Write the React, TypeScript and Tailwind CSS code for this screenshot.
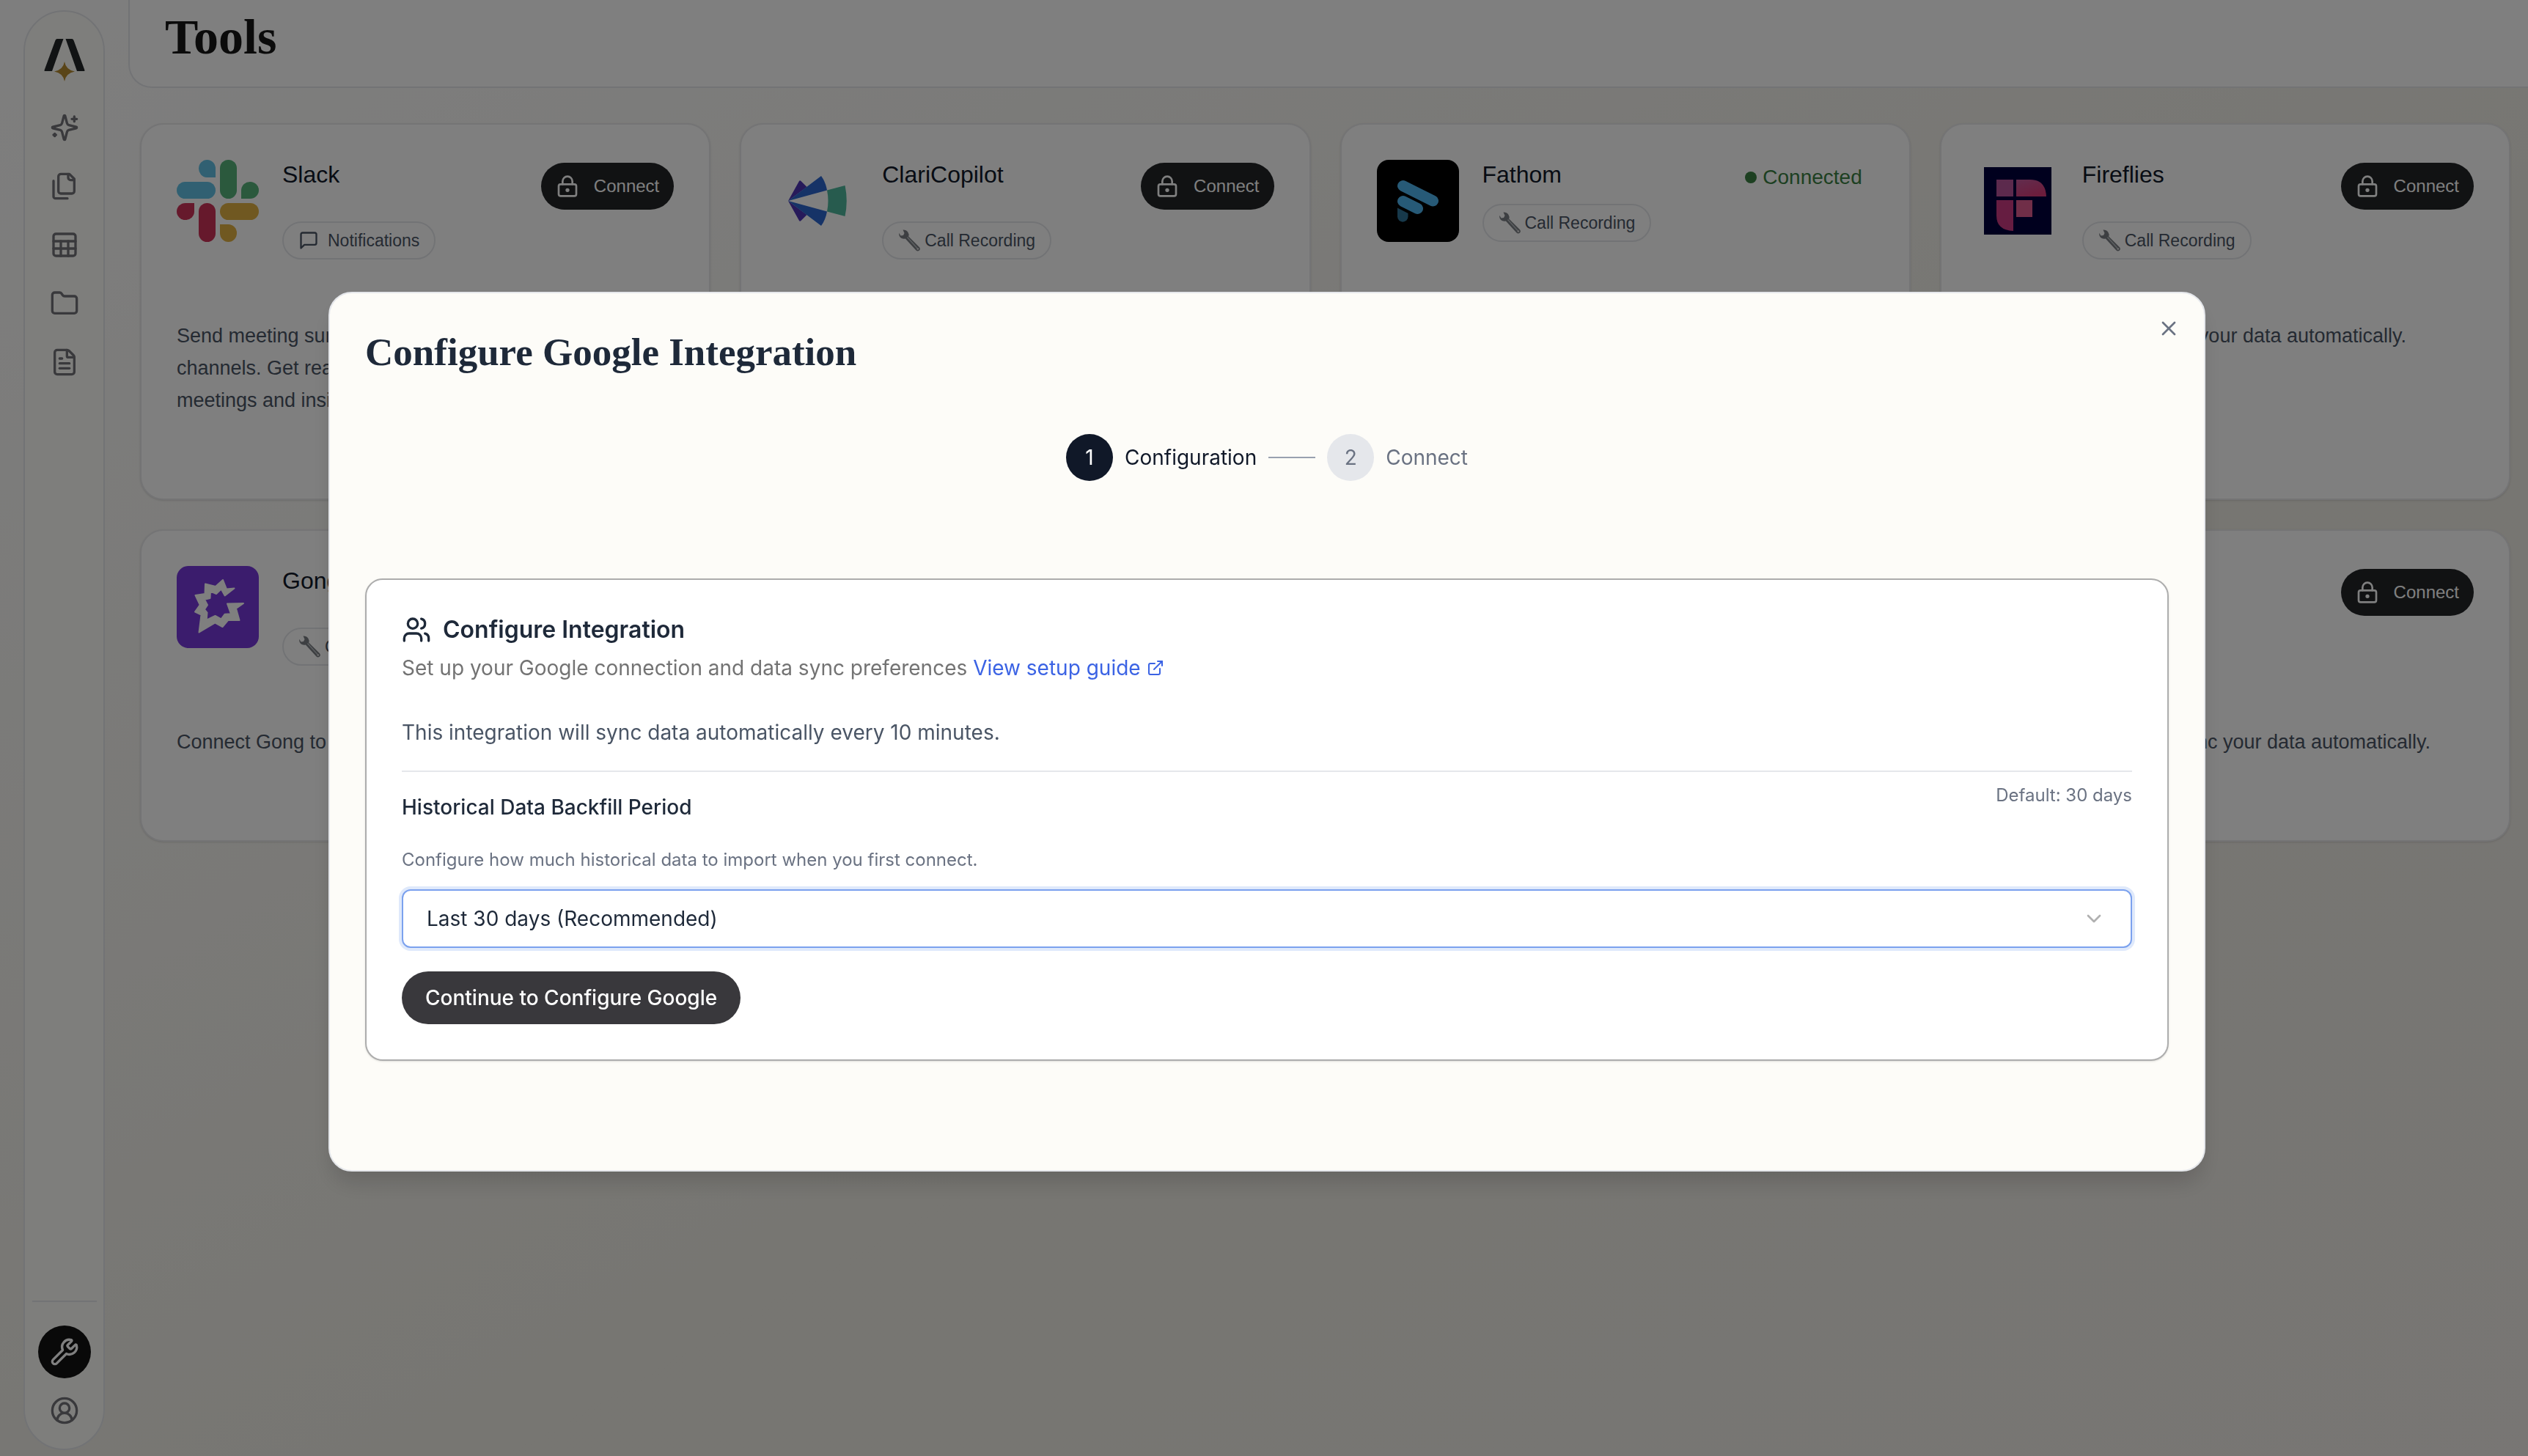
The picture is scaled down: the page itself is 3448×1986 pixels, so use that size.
import type { ReactNode } from "react";
import {
  ChevronDown,
  CircleUserRound,
  ExternalLink,
  FileText,
  Folder,
  LockKeyhole,
  Sheet,
  Users,
  Wrench,
  X,
} from "lucide-react";

type Tool = {
  name: string;
  category: string;
  description: string;
  connected?: boolean;
  logo: ReactNode;
};

/* Logos */

function BrandMark() {
  return (
    <svg viewBox="0 0 56 60" className="h-[60px] w-14">
      <path d="M18 1h8.500L11 45H1.500Q0 45 .6 43.500L15.500 3Q16.300 1 18 1z" fill="#222628" />
      <path d="M38 1h-8.500L45 45h9.500q1.500 0 .9-1.500L40.500 3Q39.700 1 38 1z" fill="#222628" />
      <path d="M28 32q1.800 11.200 14 13.500Q29.800 47.800 28 59q-1.800-11.200-14-13.500Q26.200 43.200 28 32z" fill="#b58a30" />
    </svg>
  );
}

function SparklesIcon() {
  return (
    <svg
      viewBox="0 0 24 24"
      fill="none"
      stroke="currentColor"
      strokeWidth="2"
      strokeLinecap="round"
      strokeLinejoin="round"
      className="size-10"
    >
      <path d="M9.937 15.5A2 2 0 0 0 8.500 14.063l-6.135-1.582a.5.5 0 0 1 0-.962L8.500 9.936A2 2 0 0 0 9.937 8.500l1.582-6.135a.5.5 0 0 1 .963 0L14.063 8.500A2 2 0 0 0 15.500 9.937l6.135 1.581a.5.5 0 0 1 0 .964L15.500 14.063a2 2 0 0 0-1.437 1.437l-1.582 6.135a.5.5 0 0 1-.963 0z" />
      <path d="M20 3v4M22 5h-4M4 17v2M5 18H3" />
    </svg>
  );
}

function FilesIcon() {
  return (
    <svg
      viewBox="0 0 24 24"
      fill="none"
      stroke="currentColor"
      strokeWidth="2"
      strokeLinecap="round"
      strokeLinejoin="round"
      className="size-10"
    >
      <path d="M20 7h-3a2 2 0 0 1-2-2V2" />
      <path d="M9 18a2 2 0 0 1-2-2V4a2 2 0 0 1 2-2h7l4 4v10a2 2 0 0 1-2 2Z" />
      <path d="M3 7.600v12.800A1.600 1.600 0 0 0 4.600 22h9.800" />
    </svg>
  );
}

function MessageIcon() {
  return (
    <svg
      viewBox="0 0 24 24"
      fill="none"
      stroke="currentColor"
      strokeWidth="2"
      strokeLinecap="round"
      strokeLinejoin="round"
      className="size-7"
    >
      <path d="M21 15a2 2 0 0 1-2 2H7l-4 4V5a2 2 0 0 1 2-2h14a2 2 0 0 1 2 2z" />
    </svg>
  );
}

function SpannerIcon() {
  return (
    <svg viewBox="0 0 32 32" className="size-8">
      <path
        d="M6.500 1.500 8.500 6l-1.500 3-3.500.5L1.200 5.800Q.6 11 4.600 13q3 1.200 5.200.4L24.500 29.500q2 2 4.200.3 2.200-2 .3-4.500L14.200 10.500q1-3-.8-5.700Q10.800 1.200 6.500 1.500z"
        fill="#7b7f84"
      />
      <path d="M12.500 11.500 26 26.500" stroke="#b9bdc2" strokeWidth="1.500" />
      <circle cx="26.800" cy="27.500" r="1.300" fill="#e5e5e5" />
    </svg>
  );
}

function SlackLogo() {
  return (
    <svg viewBox="0 0 112 112" className="size-28">
      <g fill="#62c1e5">
        <path d="M53 24H41a11.500 12 0 1 1 12-12z" />
        <rect x="0" y="30" width="53" height="23" rx="11.500" />
      </g>
      <g fill="#56b27b">
        <rect x="59" y="0" width="23" height="53" rx="11.500" />
        <path d="M88 53V41a12 11.500 0 1 1 12 12z" />
      </g>
      <g fill="#e0b043">
        <rect x="59" y="59" width="53" height="23" rx="11.500" />
        <path d="M59 88h11.500A11.500 12 0 1 1 59 100z" />
      </g>
      <g fill="#cc3358">
        <path d="M24 59v11.500A12 11.500 0 1 1 12 59z" />
        <rect x="30" y="59" width="23" height="53" rx="11.500" />
      </g>
    </svg>
  );
}

function ClariLogo() {
  return (
    <svg viewBox="0 0 112 112" className="size-28">
      <path d="M16 56 31 29q1-1.500 2.500 0l8 8zM16 56l15 27q1 1.500 2.500 0l8-8z" fill="#4f35b5" />
      <path d="M16 56 61 22q6 8 8 19.500zM16 56l45 34q6-8 8-19.500z" fill="#2c67cf" />
      <path d="M69 41.500 93.500 35q4.500 21 0 42L69 70.500q3-14.500 0-29z" fill="#4fb79c" />
    </svg>
  );
}

function FathomLogo() {
  return (
    <svg viewBox="0 0 112 112" className="size-28 rounded-2xl bg-black">
      <path d="M35.500 35.500 76.500 56M35.500 56.500 55.500 66.500" stroke="#4fb4ee" strokeWidth="15" strokeLinecap="round" />
      <path d="M28 65.500 42.500 73v4.500a7.200 7.200 0 0 1-14.500 0z" fill="#2f7397" />
    </svg>
  );
}

function FirefliesLogo() {
  return (
    <svg viewBox="0 0 112 112" className="size-28">
      <defs>
        <linearGradient id="ff" x1="0" y1="0" x2="0.6" y2="1">
          <stop offset="0" stopColor="#c45a9c" />
          <stop offset="1" stopColor="#d93a78" />
        </linearGradient>
      </defs>
      <rect x="10" y="10" width="92" height="92" fill="#00003c" />
      <rect x="27" y="27" width="23" height="23" fill="#b9559b" />
      <path d="M54 27h19q21 0 22 23H54z" fill="url(#ff)" />
      <path d="M27 55h23v42Q27 96 27 76z" fill="#cc3a82" />
      <rect x="54" y="55" width="22" height="23" fill="#e05c90" />
    </svg>
  );
}

function GongLogo() {
  return (
    <svg viewBox="0 0 112 112" className="size-28 rounded-2xl bg-[#7639da]">
      <path
        d="M39 24.500 53 28 63 19l5 12.500 10.500-1L65.700 40.500l-5-9L54 38l-8-3.500-.5 9.500-7.500 1.700 4 7.600-4 6 3.500 4.400-.8 10L52.500 68l8.200 4.300 5-6.600 8.300-.4-5-13.800 22-.5-10 7 4.500 16H70l-7.500 9-10-5.500L30.500 90.500l3-24-8.500-4L31.700 53 25.500 40l13-2z"
        fill="#fff"
        stroke="#fff"
        strokeWidth="2"
        strokeLinejoin="round"
      />
    </svg>
  );
}

function PlainLogo() {
  return <div className="size-28 rounded-2xl bg-gray-200" />;
}

const tools: Tool[] = [
  {
    name: "Slack",
    category: "Notifications",
    description:
      "Send meeting summaries and insights to your Slack channels. Get real-time updates about your upcoming meetings and insights.",
    logo: <SlackLogo />,
  },
  {
    name: "ClariCopilot",
    category: "Call Recording",
    description: "Connect ClariCopilot to sync your data automatically.",
    logo: <ClariLogo />,
  },
  {
    name: "Fathom",
    category: "Call Recording",
    description: "Connect Fathom to sync your data automatically.",
    connected: true,
    logo: <FathomLogo />,
  },
  {
    name: "Fireflies",
    category: "Call Recording",
    description: "Connect Fireflies to sync your data automatically.",
    logo: <FirefliesLogo />,
  },
  {
    name: "Gong",
    category: "Call Recording",
    description: "Connect Gong to sync your data automatically.",
    logo: <GongLogo />,
  },
  {
    name: "Google",
    category: "Calendar",
    description: "Connect Google to sync your data automatically.",
    logo: <PlainLogo />,
  },
  {
    name: "HubSpot",
    category: "CRM",
    description: "Connect HubSpot to sync your data automatically.",
    logo: <PlainLogo />,
  },
  {
    name: "Salesforce",
    category: "CRM",
    description: "Connect Salesforce to sync your data automatically.",
    logo: <PlainLogo />,
  },
];

function ToolCard({ tool }: { tool: Tool }) {
  return (
    <article className="rounded-[32px] border-2 border-[#e8e8ea] bg-white p-12 shadow-sm">
      <div className="flex items-start gap-8">
        {tool.logo}

        <div className="flex-1">
          <div className="flex items-start justify-between">
            <h2 className="text-[32px] leading-10 text-gray-900">{tool.name}</h2>

            {tool.connected ? (
              <p className="mt-1 flex h-10 items-center gap-2 px-4 text-[28px] text-[#3a8043]">
                <span className="size-4 rounded-full bg-[#3a8043]" />
                Connected
              </p>
            ) : (
              <button className="mt-1 flex h-16 items-center gap-5 rounded-full bg-[#222427] px-5 text-2xl text-white">
                <LockKeyhole size={32} />
                Connect
              </button>
            )}
          </div>

          <span className="mt-4 inline-flex h-[52px] items-center rounded-full border-2 border-gray-200 px-5 text-[23px] text-gray-600">
            {tool.category === "Notifications" ? (
              <span className="mr-3">
                <MessageIcon />
              </span>
            ) : (
              <span className="mr-1">
                <SpannerIcon />
              </span>
            )}
            {tool.category}
          </span>
        </div>
      </div>

      <p className="mt-[82px] mb-16 text-[27px] leading-11 text-gray-600">{tool.description}</p>
    </article>
  );
}

function Sidebar() {
  return (
    <aside className="mt-3.5 mb-2 ml-8 flex w-[111px] flex-col items-center rounded-full border-2 border-gray-200 bg-[#fdfdf9] pt-9 pb-8 text-[#737378]">
      <BrandMark />

      <nav className="mt-[42px] flex flex-col gap-10">
        <a href="#assistant" aria-label="Assistant"><SparklesIcon /></a>
        <a href="#documents" aria-label="Documents"><FilesIcon /></a>
        <a href="#tables" aria-label="Tables"><Sheet size={40} /></a>
        <a href="#folders" aria-label="Folders"><Folder size={40} /></a>
        <a href="#reports" aria-label="Reports"><FileText size={40} /></a>
      </nav>

      <div className="mt-auto flex flex-col items-center border-t-2 border-gray-200 px-2 pt-8">
        <a
          href="#tools"
          aria-label="Tools"
          className="flex size-18 items-center justify-center rounded-full bg-[#121212] text-white"
        >
          <Wrench size={40} />
        </a>
        <a href="#account" aria-label="Account" className="mt-6">
          <CircleUserRound size={40} />
        </a>
      </div>
    </aside>
  );
}

function ConfigureDialog() {
  return (
    <div
      role="dialog"
      aria-labelledby="dialog-title"
      className="relative w-full max-w-[2560px] rounded-[32px] border-2 border-gray-200 bg-[#fdfcf8] px-12 pt-12 pb-[149px] font-[Inter,sans-serif] text-[28px] leading-10 shadow-[0_20px_30px_-6px_rgba(0,0,0,0.15)]"
    >
      <button aria-label="Close" className="absolute top-8 right-8 text-gray-500">
        <X size={32} />
      </button>

      <h2
        id="dialog-title"
        className="font-['Liberation_Serif',serif] text-[53px] leading-16 font-bold text-gray-800"
      >
        Configure Google Integration
      </h2>

      {/* Steps */}
      <ol className="mt-20 flex items-center justify-center gap-4">
        <li className="flex items-center gap-4 text-gray-900">
          <span className="flex size-16 items-center justify-center rounded-full bg-gray-900 text-white">1</span>
          Configuration
        </li>
        <li aria-hidden="true" className="h-0.5 w-16 bg-gray-400" />
        <li className="flex items-center gap-4 text-gray-500">
          <span className="flex size-16 items-center justify-center rounded-full bg-gray-200">2</span>
          Connect
        </li>
      </ol>

      {/* Configuration form */}
      <section className="mt-[133px] rounded-3xl border-2 border-[#adadad] bg-white p-12 shadow-sm">
        <h3 className="flex items-center gap-4 text-[32px] leading-10 font-semibold text-gray-800">
          <Users size={40} />
          Configure Integration
        </h3>
        <p className="mt-3 text-[#737373]">
          Set up your Google connection and data sync preferences{" "}
          <a href="#guide" className="inline-flex items-center gap-2 align-bottom text-[#3b63e4]">
            View setup guide
            <ExternalLink size={24} />
          </a>
        </p>

        <p className="mt-12 text-gray-600">
          This integration will sync data automatically every 10 minutes.
        </p>

        <div className="mt-8 flex items-start justify-between border-t-2 border-gray-200 pt-4">
          <label htmlFor="backfill" className="leading-16 font-medium text-gray-800">
            Historical Data Backfill Period
          </label>
          <span className="text-2xl leading-8 text-gray-500">Default: 30 days</span>
        </div>
        <p className="mt-6 text-2xl leading-8 text-gray-500">
          Configure how much historical data to import when you first connect.
        </p>

        <div className="relative mt-6">
          <select
            id="backfill"
            className="h-20 w-full appearance-none rounded-xl border-2 border-[#7ba1ee] bg-white px-8 text-gray-800 ring-4 ring-[#dfe9fb]"
          >
            <option>Last 30 days (Recommended)</option>
            <option>Last 60 days</option>
            <option>Last 90 days</option>
          </select>
          <ChevronDown size={32} className="pointer-events-none absolute top-6 right-9 text-[#b0b0b0]" />
        </div>

        <button className="mt-8 h-18 rounded-full bg-[#39383c] px-8 font-medium text-white">
          Continue to Configure Google
        </button>
      </section>
    </div>
  );
}

export default function App() {
  return (
    <div className="flex min-h-screen bg-linear-to-br from-[#fdfdfd] via-[#eeece4] via-60% to-[#f0ece8] font-['Liberation_Sans',sans-serif]">
      <Sidebar />

      <main className="ml-8 flex-1">
        <header className="flex h-[120px] items-start rounded-bl-[32px] border-b-2 border-l-2 border-gray-200 bg-white px-12 pt-3.5">
          <h1 className="font-['Liberation_Serif',serif] text-[68px] leading-[72px] font-bold text-[#171717]">
            Tools
          </h1>
        </header>

        <div className="grid grid-cols-4 gap-10 pt-12 pr-6 pl-4">
          {tools.map((tool) => (
            <ToolCard key={tool.name} tool={tool} />
          ))}
        </div>
      </main>

      <div className="fixed inset-0 flex items-center justify-center bg-black/50 pt-2.5 pl-2">
        <ConfigureDialog />
      </div>
    </div>
  );
}
